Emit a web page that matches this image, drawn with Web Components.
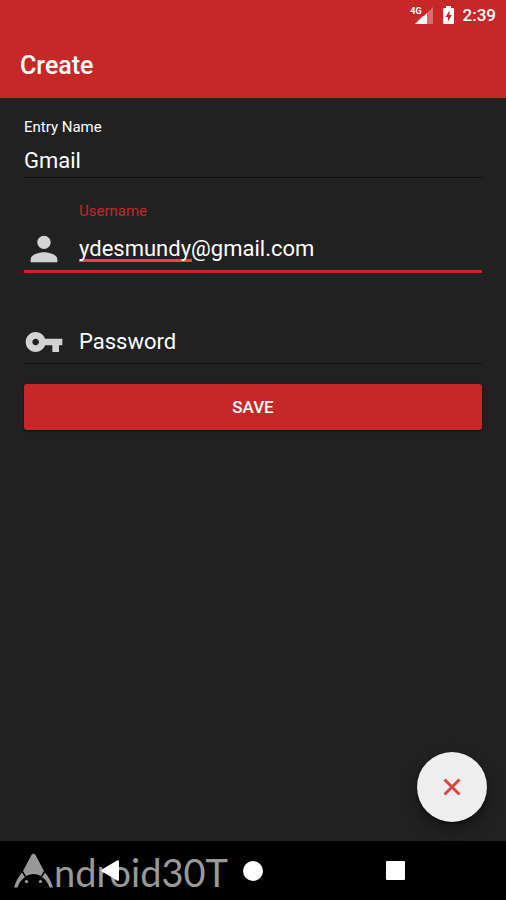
<!DOCTYPE html>
<html lang="en">
<head>
<meta charset="utf-8">
<meta name="viewport" content="width=device-width, initial-scale=1">
<title>Create</title>
<style>
  :root { --accent: #c62828; --surface: #212121; --ink: #fff; --icon: #d3d3d3; }
  body { margin: 0; background: var(--surface); color: var(--ink); font-family: Roboto, "Liberation Sans", sans-serif; }
</style>
</head>
<body>
<app-screen>
  <status-bar slot="top" time="2:39" network="4G"></status-bar>
  <title-bar slot="top">Create</title-bar>
  <text-field label="Entry Name" value="Gmail"></text-field>
  <text-field label="Username" value="ydesmundy@gmail.com" active>
    <svg slot="icon" width="40" height="40" viewBox="0 0 24 24" fill="currentColor" aria-hidden="true"><path d="M12 12c2.21 0 4-1.79 4-4s-1.79-4-4-4-4 1.79-4 4 1.79 4 4 4zm0 2c-2.67 0-8 1.340-8 4v2h16v-2c0-2.660-5.330-4-8-4z"/></svg>
  </text-field>
  <text-field placeholder="Password" type="password">
    <svg slot="icon" width="40" height="40" viewBox="0 0 24 24" fill="currentColor" aria-hidden="true"><path d="M12.650 10C11.830 7.670 9.610 6 7 6c-3.310 0-6 2.690-6 6s2.690 6 6 6c2.610 0 4.830-1.670 5.650-4H17v4h4v-4h2v-4H12.650zM7 14c-1.100 0-2-.9-2-2s.9-2 2-2 2 .9 2 2-.9 2-2 2z"/></svg>
  </text-field>
  <save-button>SAVE</save-button>
  <close-fab slot="float"></close-fab>
  <nav-bar slot="bottom">ndroid30T</nav-bar>
</app-screen>
<script>
const define = (name, html, setup) => {
  const template = document.createElement('template');
  template.innerHTML = html;
  customElements.define(name, class extends HTMLElement {
    constructor() {
      super();
      this.attachShadow({ mode: 'open' }).append(template.content.cloneNode(true));
    }
    connectedCallback() { if (setup) setup(this, this.shadowRoot); }
  });
};

define('app-screen', `
  <style>
    :host { display: flex; flex-direction: column; min-height: 100vh; }
    main { flex: 1; position: relative; box-sizing: border-box; padding: 20px 24px; }
    slot[name=float] { display: block; position: absolute; right: 19px; bottom: 19px; }
  </style>
  <header><slot name="top"></slot></header>
  <main><slot></slot><slot name="float"></slot></main>
  <slot name="bottom"></slot>`);

define('status-bar', `
  <style>
    :host { display: flex; justify-content: flex-end; align-items: center; height: 30px; padding-right: 10px; background: var(--accent); font-size: 17px; font-weight: 500; }
    .net { font-size: 9px; font-weight: 700; line-height: 12px; align-self: flex-start; margin: 5px -7px 0 0; }
    .battery { margin: 0 9px 0 10px; }
  </style>
  <span class="net"></span>
  <svg width="18" height="17" viewBox="0 0 18 17" aria-hidden="true"><path d="M18 0V17H12V6z" fill="#fff" opacity=".32"/><path d="M12 6V17H0L8 9h1z" fill="#fff"/></svg>
  <svg class="battery" width="11" height="18" viewBox="0 0 11 18" aria-hidden="true"><path fill="#fff" fill-rule="evenodd" d="M3 0h5v2h2q1 0 1 1v14q0 1-1 1H1q-1 0-1-1V3q0-1 1-1h2zM6.500 4.500 2.500 11H5v4.500L8.800 9H6.500z"/></svg>
  <span class="time"></span>`,
  (el, root) => {
    root.querySelector('.net').textContent = el.getAttribute('network');
    root.querySelector('.time').textContent = el.getAttribute('time');
  });

define('title-bar', `
  <style>
    :host { display: flex; align-items: center; box-sizing: border-box; height: 68px; padding: 4px 20px 0; background: var(--accent); }
    h1 { margin: 0; font-size: 25px; font-weight: 500; line-height: 32px; }
  </style>
  <h1><slot></slot></h1>`);

define('text-field', `
  <style>
    :host { display: grid; grid-template-columns: auto 1fr; align-items: center; border-bottom: 1px solid #101010; margin-bottom: 24px; }
    label { grid-column: 2; font-size: 15px; line-height: 18px; min-height: 18px; margin-bottom: 9px; }
    .icon { color: var(--icon); width: 55px; height: 40px; }
    ::slotted(svg) { display: block; }
    .box { grid-column: 2; position: relative; height: 32px; }
    input { display: block; width: 100%; height: 32px; box-sizing: border-box; padding: 0; border: 0; outline: 0; background: none; color: inherit; font: inherit; font-size: 22px; line-height: 32px; }
    input::placeholder { color: inherit; opacity: 1; }
    .spell { display: none; }
    :host([active]) { border-bottom: 3px solid var(--accent); margin-bottom: 22px; }
    :host([active]) label { color: var(--accent); }
    :host([active]) .spell { display: block; position: absolute; left: 0; bottom: 3px; width: 113px; height: 3px; background: #f44336; z-index: -1; }
    :host([active]) .box { z-index: 0; }
    :host([has-icon]) { padding-bottom: 1px; }
    :host([plain]) { margin-bottom: 20px; }
  </style>
  <label for="field"></label>
  <div class="icon"><slot name="icon"></slot></div>
  <div class="box"><span class="spell"></span><input id="field" spellcheck="false" autocomplete="off"></div>`,
  (el, root) => {
    const input = root.querySelector('input');
    const hint = el.getAttribute('placeholder') || '';
    root.querySelector('label').textContent = el.getAttribute('label') || '';
    input.type = el.getAttribute('type') || 'text';
    input.value = el.getAttribute('value') || '';
    if (hint) {
      input.placeholder = hint;
      input.setAttribute('aria-label', hint);
      el.toggleAttribute('plain', true);
    }
    if (el.querySelector('[slot=icon]')) el.toggleAttribute('has-icon', true);
    else root.querySelector('.icon').remove();
  });

define('save-button', `
  <style>
    :host { display: block; }
    button { display: block; width: 100%; height: 46px; padding: 0; border: 0; border-radius: 3px; background: var(--accent); color: inherit; font: inherit; font-size: 17px; font-weight: 500; box-shadow: 0 1px 2px #0009; cursor: pointer; }
  </style>
  <button type="button"><slot></slot></button>`);

define('close-fab', `
  <style>
    :host { display: block; }
    button { display: grid; place-items: center; width: 70px; height: 70px; padding: 0; border: 0; border-radius: 50%; background: #eee; box-shadow: 0 1px 2px #0009, 0 6px 14px #0006; cursor: pointer; }
  </style>
  <button type="button" aria-label="Close"><svg width="18" height="18" viewBox="0 0 18 18" stroke="#d14949" stroke-width="3" aria-hidden="true"><path d="M1.500 1.500l15 15M16.500 1.500l-15 15"/></svg></button>`);

define('nav-bar', `
  <style>
    :host { display: block; position: relative; background: #000; }
    nav { position: relative; display: grid; grid-template-columns: repeat(3, 1fr); height: 59px; padding: 0 39px; }
    button { display: grid; place-items: center; padding: 0; border: 0; background: none; cursor: pointer; }
    .mark { position: absolute; left: 14px; top: 8px; display: flex; gap: 1px; align-items: flex-start; color: #999; font: 400 38px/46px Lato, sans-serif; }
    .mark svg { margin-top: 4px; }
  </style>
  <div class="mark">
    <svg width="39" height="35" viewBox="0 0 39 35" aria-hidden="true">
      <path fill="#999" d="M17.500 2q2-3 4 0L30 18l-3 5q-7.500-4-15 0l-3-5z"/>
      <path fill="#999" d="M8 19.500 11 24Q5.500 28 3.500 34.500H0Q2.500 26 8 19.500zM31 19.500 28 24q5.500 4 7.500 10.500H39Q36.500 26 31 19.500z"/>
      <circle cx="12.500" cy="28.500" r="1.600" fill="#999"/><circle cx="26.500" cy="28.500" r="1.600" fill="#999"/>
    </svg>
    <span><slot></slot></span>
  </div>
  <nav>
    <button type="button" aria-label="Back"><svg width="18" height="21" viewBox="0 0 18 21" fill="#fff"><path d="M16 .5q2-1 2 1v18q0 2-2 1L1 11.500q-1.500-1 0-2z"/></svg></button>
    <button type="button" aria-label="Home"><svg width="20" height="20" viewBox="0 0 20 20" fill="#fff"><circle cx="10" cy="10" r="10"/></svg></button>
    <button type="button" aria-label="Recent apps"><svg width="19" height="19" viewBox="0 0 19 19" fill="#fff"><rect width="19" height="19" rx="1"/></svg></button>
  </nav>`);
</script>
</body>
</html>
